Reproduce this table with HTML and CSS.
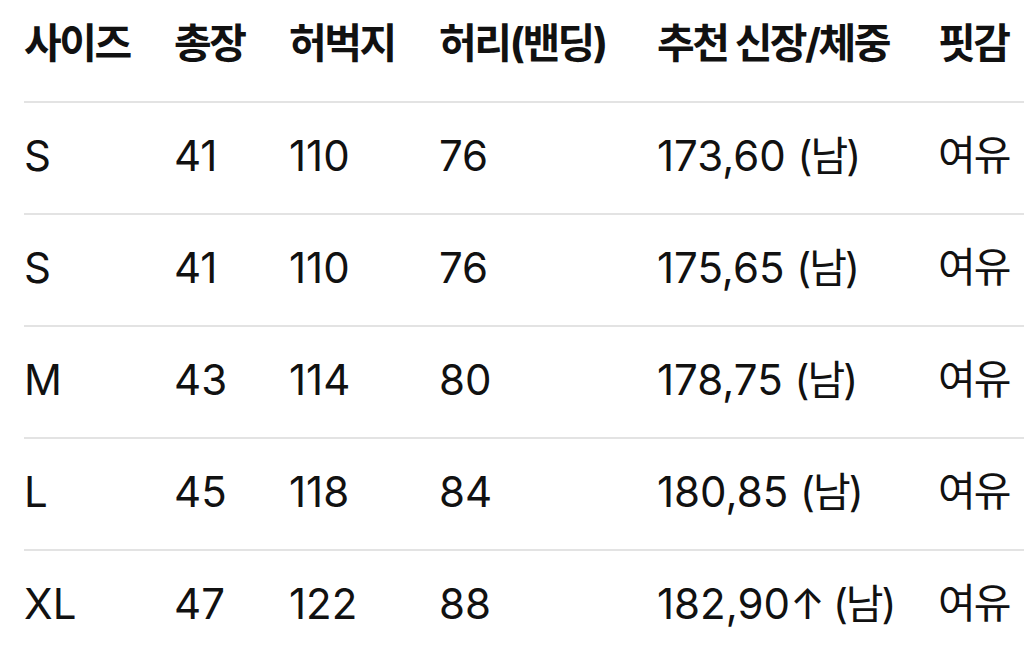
FILE: index.html
```html
<!DOCTYPE html>
<html lang="ko">
<head>
<meta charset="utf-8">
<link rel="stylesheet" href="styles.css">
</head>
<body>
<div class="table">
  <div class="row head">
    <div class="c ko">사이즈</div><div class="c ko">총장</div><div class="c ko">허벅지</div><div class="c ko">허리(밴딩)</div><div class="c ko">추천 신장/체중</div><div class="c ko">핏감</div>
  </div>
  <div class="row">
    <div class="c">S</div><div class="c">41</div><div class="c">110</div><div class="c">76</div><div class="c">173,60 <span class="ko">(남)</span></div><div class="c ko">여유</div>
  </div>
  <div class="row">
    <div class="c">S</div><div class="c">41</div><div class="c">110</div><div class="c">76</div><div class="c">175,65 <span class="ko">(남)</span></div><div class="c ko">여유</div>
  </div>
  <div class="row">
    <div class="c">M</div><div class="c">43</div><div class="c">114</div><div class="c">80</div><div class="c">178,75 <span class="ko">(남)</span></div><div class="c ko">여유</div>
  </div>
  <div class="row">
    <div class="c">L</div><div class="c">45</div><div class="c">118</div><div class="c">84</div><div class="c">180,85 <span class="ko">(남)</span></div><div class="c ko">여유</div>
  </div>
  <div class="row">
    <div class="c">XL</div><div class="c">47</div><div class="c">122</div><div class="c">88</div><div class="c">182,90<span class="arrow">↑</span> <span class="ko">(남)</span></div><div class="c ko">여유</div>
  </div>
</div>
</body>
</html>
```

FILE: styles.css
```css
html, body {
  margin: 0;
  padding: 0;
  background: #ffffff;
  overflow: hidden;
}
body {
  font-family: "Inter", "Noto Sans CJK KR", sans-serif;
  font-size: 42px;
  color: #111111;
}
.table {
  padding-left: 24px;
}
.row {
  display: grid;
  grid-template-columns: 150px 115px 150px 218px 281px 120px;
  height: 112px;
  padding-bottom: 4px;
  align-items: center;
  border-top: 2px solid #e3e3e3;
  box-sizing: border-box;
  white-space: nowrap;
  line-height: 1.2;
}
.row.head {
  height: 101px;
  padding-bottom: 14px;
  border-top: none;
  font-weight: 700;
}
.ko {
  font-size: 41px;
  letter-spacing: -2px;
}
.head .ko {
  letter-spacing: -2.5px;
}
.arrow {
  letter-spacing: -4px;
}
```
